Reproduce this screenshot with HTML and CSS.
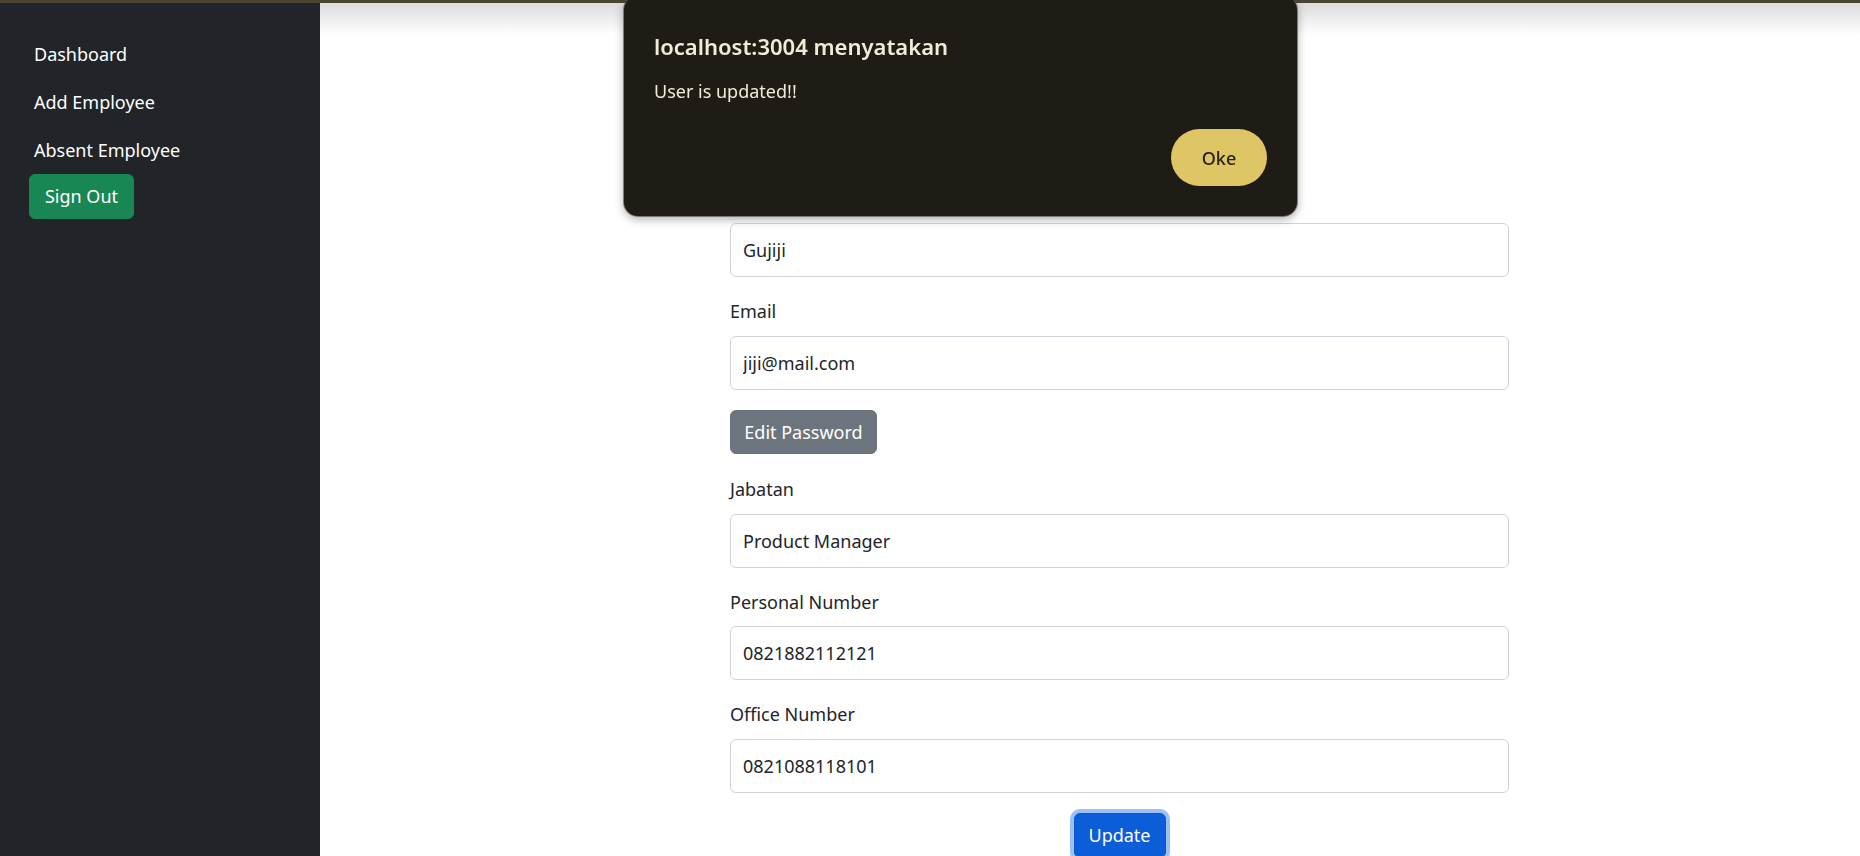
FILE: index.html
```html
<!DOCTYPE html>
<html lang="en">
<head>
<meta charset="utf-8">
<title>Edit Employee</title>
<link rel="stylesheet" href="styles.css">
</head>
<body>
<div class="topstrip"></div>
<div class="layout">
  <aside class="sidebar">
    <ul class="nav">
      <li><a class="nav-link" href="#">Dashboard</a></li>
      <li><a class="nav-link" href="#">Add Employee</a></li>
      <li><a class="nav-link" href="#">Absent Employee</a></li>
    </ul>
    <button class="btn btn-success">Sign Out</button>
  </aside>
  <main class="main">
    <div class="main-shade"></div>
    <form class="form">
      <div class="field">
        <label>Name</label>
        <input class="form-control" type="text" value="Gujiji">
      </div>
      <div class="field">
        <label>Email</label>
        <input class="form-control" type="text" value="jiji@mail.com">
      </div>
      <div class="field field-btn">
        <button type="button" class="btn btn-secondary">Edit Password</button>
      </div>
      <div class="field">
        <label>Jabatan</label>
        <input class="form-control" type="text" value="Product Manager">
      </div>
      <div class="field">
        <label>Personal Number</label>
        <input class="form-control" type="text" value="0821882112121">
      </div>
      <div class="field">
        <label>Office Number</label>
        <input class="form-control" type="text" value="0821088118101">
      </div>
      <div class="actions">
        <button type="button" class="btn btn-primary focused">Update</button>
      </div>
    </form>
  </main>
</div>
<div class="dialog">
  <div class="dialog-title">localhost:3004 menyatakan</div>
  <div class="dialog-msg">User is updated!!</div>
  <div class="dialog-footer">
    <button class="dialog-ok">Oke</button>
  </div>
</div>
</body>
</html>
```
FILE: styles.css
```css
* { box-sizing: border-box; }
html, body {
  margin: 0;
  padding: 0;
  height: 100%;
  overflow: hidden;
  background: #fff;
  font-family: "Noto Sans", "Open Sans", sans-serif;
  font-size: 18px;
  color: #212529;
}
.topstrip {
  height: 3px;
  background: #4a4531;
}
.layout {
  display: flex;
  height: calc(100vh - 3px);
}
.sidebar {
  width: 320px;
  flex: none;
  background: #212529;
  padding: 27px 0 0 29px;
}
.nav {
  list-style: none;
  margin: 0;
  padding: 0;
}
.nav-link {
  display: block;
  padding: 9.6px 5px;
  line-height: 28.8px;
  color: #fff;
  text-decoration: none;
}
.btn {
  font-family: inherit;
  font-size: 18px;
  border: 1px solid transparent;
  border-radius: 6px;
  color: #fff;
  display: inline-flex;
  align-items: center;
  justify-content: center;
  padding: 0;
  white-space: nowrap;
  cursor: pointer;
}
.btn-success {
  background: #198754;
  border-color: #198754;
  height: 45px;
  width: 105px;
}
.btn-secondary {
  background: #6c757d;
  border-color: #6c757d;
  height: 44px;
  width: 147px;
}
.btn-primary {
  background: #0b5ed7;
  border-color: #0a58ca;
  height: 45px;
  width: 92px;
}
.focused {
  box-shadow: 0 0 0 4px #9cc0fb;
}
.main {
  flex: 1;
  position: relative;
}
.main-shade {
  position: absolute;
  left: 0;
  right: 0;
  top: 0;
  height: 32px;
  background: linear-gradient(rgba(0,0,0,0.14), rgba(0,0,0,0));
  pointer-events: none;
}
.form {
  width: 779px;
  margin-left: 410px;
  padding-top: 181.5px;
}
.field {
  margin-bottom: 20px;
}
.field-btn {
  margin-bottom: 21.5px;
}
.field label {
  display: block;
  line-height: 29px;
  margin-bottom: 9.5px;
  color: #212529;
}
.form-control {
  display: block;
  width: 100%;
  height: 54px;
  padding: 0 12px;
  font-family: inherit;
  font-size: 18px;
  color: #212529;
  background: #fff;
  border: 1px solid #ced4da;
  border-radius: 6px;
  outline: none;
}
.actions {
  display: flex;
  justify-content: center;
}
.dialog {
  position: fixed;
  left: 624px;
  top: -4px;
  width: 673px;
  height: 220px;
  background: #1f1c15;
  border-radius: 14px;
  box-shadow: 0 0 0 1px rgba(90,90,90,0.7), 0 3px 10px rgba(0,0,0,0.35);
  padding: 34.5px 30px 30px 30px;
  display: flex;
  flex-direction: column;
  color: #f1ebda;
}
.dialog-title {
  font-size: 22px;
  font-weight: 600;
  line-height: 30px;
}
.dialog-msg {
  margin-top: 18px;
  font-size: 18px;
  line-height: 24px;
}
.dialog-footer {
  margin-top: auto;
  display: flex;
  justify-content: flex-end;
}
.dialog-ok {
  width: 96px;
  height: 57px;
  border: none;
  border-radius: 29px;
  background: #dec565;
  color: #2a2412;
  font-family: inherit;
  font-size: 18px;
  font-weight: 500;
  cursor: pointer;
}
```
